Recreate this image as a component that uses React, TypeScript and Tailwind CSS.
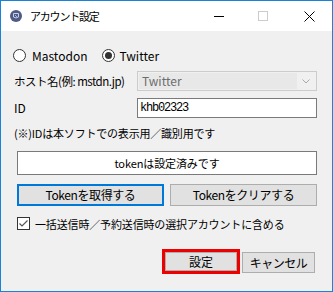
import React from "react";

function Radio({ checked }: { checked?: boolean }) {
  return (
    <div className="w-[13px] h-[13px] rounded-full border border-[#333333] bg-white flex items-center justify-center shrink-0">
      {checked && <div className="w-[7px] h-[7px] rounded-full bg-[#333333]" />}
    </div>
  );
}

export default function App() {
  return (
    <div className="w-[333px] h-[292px] border border-[#1883d7] bg-[#f0f0f0] flex flex-col text-[12px] leading-[16px] text-black font-['Noto_Sans_CJK_JP',sans-serif] overflow-hidden">
      {/* Title bar */}
      <div className="h-[30px] bg-white flex items-center shrink-0">
        <div className="ml-[9px] w-[12px] h-[12px] rounded-full bg-[#4d5b86] flex items-center justify-center shrink-0">
          <svg width="8" height="8" viewBox="0 0 8 8">
            <path d="M1.5 1.5 L6.5 1.5 L6.5 5 Q4 7 1.5 5 Z" fill="none" stroke="#c9d0e6" strokeWidth="1" />
            <path d="M3 3 L5 5" stroke="#c9d0e6" strokeWidth="0.8" />
          </svg>
        </div>
        <span className="ml-[8px] text-[11px] tracking-[-1.2px]">アカウント設定</span>
        <div className="ml-auto flex h-full">
          <div className="w-[46px] h-full flex items-center justify-center">
            <div className="w-[10px] h-px bg-black ml-[3px]" />
          </div>
          <div className="w-[46px] h-full flex items-center justify-center">
            <div className="w-[10px] h-[10px] border border-[#cccccc]" />
          </div>
          <div className="w-[46px] h-full flex items-center justify-center">
            <svg width="11" height="11" viewBox="0 0 11 11">
              <path d="M0.5 0.5 L10.5 10.5 M10.5 0.5 L0.5 10.5" stroke="#000" strokeWidth="1" />
            </svg>
          </div>
        </div>
      </div>

      {/* Body */}
      <div className="flex flex-col pt-[18px]">
        {/* Radios */}
        <div className="flex items-center h-[13px] pl-[12px]">
          <Radio />
          <span className="ml-[6px] text-[12px]">Mastodon</span>
          <div className="ml-[14px]">
            <Radio checked />
          </div>
          <span className="ml-[5px] text-[12px]">Twitter</span>
        </div>

        {/* Host */}
        <div className="flex items-center mt-[9px] h-[20px] pl-[13px]">
          <span className="w-[123px] text-[11.5px] tracking-[-0.5px] whitespace-nowrap">ホスト名(例: mstdn.jp)</span>
          <div className="w-[180px] h-[20px] border border-[#cccccc] bg-[#f0f0f0] flex items-stretch p-px">
            <div className="flex-1 bg-[#e8e8e8] flex items-center pl-[3px] text-[#6d6d6d] text-[12px]">Twitter</div>
            <div className="w-[18px] flex items-center justify-center">
              <svg width="8" height="5" viewBox="0 0 8 5">
                <path d="M0.5 0.5 L4 4 L7.5 0.5" fill="none" stroke="#a8a8a8" strokeWidth="1" />
              </svg>
            </div>
          </div>
        </div>

        {/* ID */}
        <div className="flex items-center mt-[7px] h-[20px] pl-[13px]">
          <span className="w-[123px] text-[12px]">ID</span>
          <div className="w-[180px] h-[20px] border border-[#7a7a7a] bg-white flex items-center pl-[2px] font-['Liberation_Mono',monospace] text-[12px] tracking-[-1.2px]">
            khb02323
          </div>
        </div>

        {/* Note */}
        <div className="mt-[7px] pl-[13px] h-[16px] flex items-center text-[11px] tracking-[-0.2px] whitespace-nowrap">
          (※)IDは本ソフトでの表示用／識別用です
        </div>

        {/* token box */}
        <div className="mt-[10px] ml-[16px] w-[300px] h-[24px] border border-[#7a7a7a] bg-white flex items-center justify-center text-[11px] tracking-[-0.1px]">
          tokenは設定済みです
        </div>

        {/* Token buttons */}
        <div className="mt-[9px] ml-[16px] flex gap-[6px]">
          <div className="w-[147px] h-[22px] border-2 border-[#0078d7] bg-[#e1e1e1] flex items-center justify-center text-[12px] tracking-[-0.4px]">
            Tokenを取得する
          </div>
          <div className="w-[147px] h-[22px] border border-[#adadad] bg-[#e1e1e1] flex items-center justify-center text-[12px] tracking-[-0.4px]">
            Tokenをクリアする
          </div>
        </div>

        {/* Checkbox */}
        <div className="mt-[11px] ml-[16px] flex items-center h-[13px]">
          <div className="w-[13px] h-[13px] border border-[#333333] bg-white flex items-center justify-center shrink-0">
            <svg width="11" height="11" viewBox="0 0 11 11">
              <path d="M1.5 5.5 L4 8 L9.5 2.5" fill="none" stroke="#555555" strokeWidth="1.2" />
            </svg>
          </div>
          <span className="ml-[5px] text-[11px] tracking-[-0.15px] whitespace-nowrap">
            一括送信時／予約送信時の選択アカウントに含める
          </span>
        </div>

        {/* Bottom buttons */}
        <div className="mt-[19px] flex justify-end items-start pr-[17px] gap-[2px]">
          <div className="w-[78px] h-[25px] border-[3px] border-[#ee0000] flex">
            <div className="flex-1 border border-[#adadad] bg-[#e1e1e1] flex items-center justify-center text-[12px]">
              設定
            </div>
          </div>
          <div className="mt-[3px] w-[73px] h-[21px] border border-[#adadad] bg-[#e1e1e1] flex items-center justify-center text-[12px] tracking-[-0.5px]">
            キャンセル
          </div>
        </div>
      </div>
    </div>
  );
}
